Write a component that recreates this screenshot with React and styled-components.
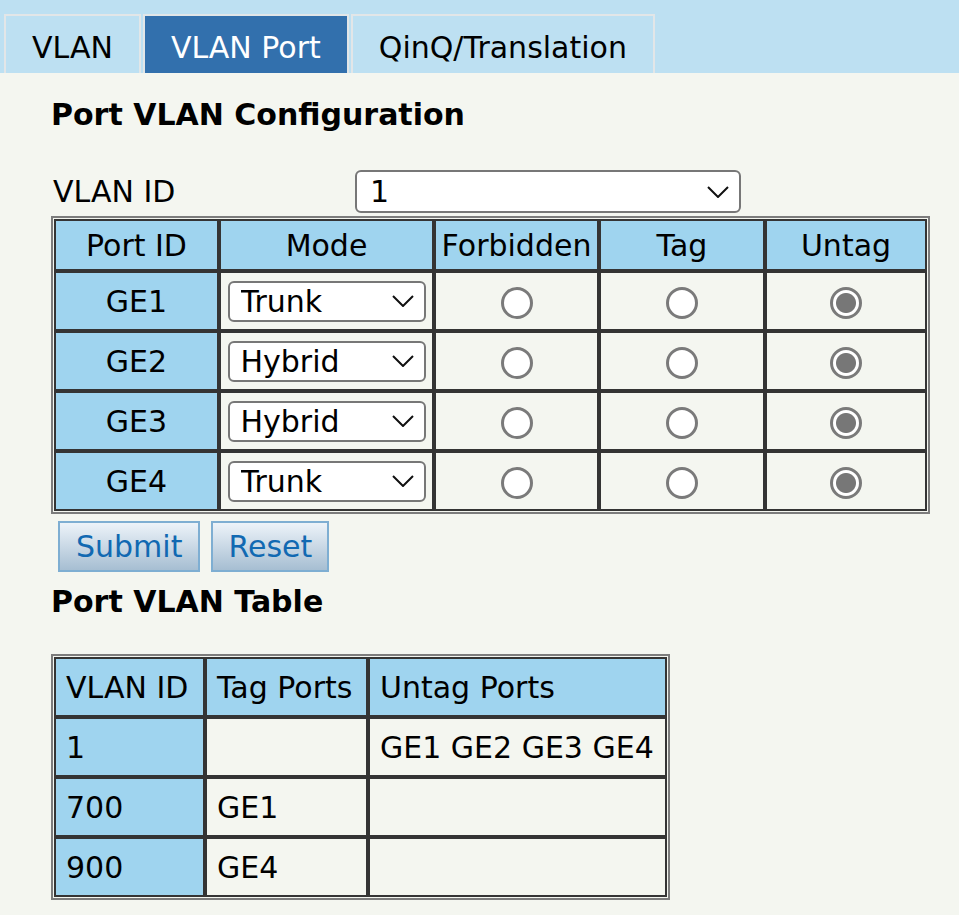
import styled, { createGlobalStyle } from "styled-components";

const GlobalStyle = createGlobalStyle`
  body {
    margin: 0;
    background: #f4f6f0;
    font-family: "DejaVu Sans", Verdana, sans-serif;
    font-size: 30px;
    color: #000;
  }
`;

const TabBar = styled.div`
  display: flex;
  gap: 2px;
  padding: 14px 0 0 4px;
  background: #bde0f2;
`;

const Tab = styled.div`
  height: 59px;
  box-sizing: border-box;
  padding: 5px 26px 0;
  display: flex;
  align-items: center;
  border: 2px solid #e2e6e8;
  border-bottom: none;
  background: ${(p) => (p.$active ? "#3270ad" : "#bde0f2")};
  color: ${(p) => (p.$active ? "#fff" : "#000")};
`;

const Content = styled.div`
  padding: 0 0 14px 51px;
`;

const Heading = styled.h2`
  font-size: 30px;
  font-weight: bold;
  margin: 0;
  height: ${(p) => p.$h}px;
  display: flex;
  align-items: center;
`;

const IdRow = styled.div`
  display: flex;
  align-items: center;
  height: 43px;
  margin: 15px 0 3px 2px;
`;

const Label = styled.span`
  width: 302px;
`;

const SelectWrap = styled.div`
  position: relative;
  display: inline-block;
  vertical-align: middle;
  width: ${(p) => p.$w}px;
  height: ${(p) => p.$h}px;
`;

const Select = styled.select`
  appearance: none;
  display: block;
  width: 100%;
  height: 100%;
  box-sizing: border-box;
  border: 2px solid #777;
  border-radius: 6px;
  background: #fff;
  font-family: inherit;
  font-size: 30px;
  color: #000;
  padding: 0 0 0 ${(p) => p.$pad}px;
  margin: 0;
`;

const Chevron = styled.svg`
  position: absolute;
  right: 12px;
  top: 50%;
  transform: translateY(-50%);
  pointer-events: none;
`;

const Grid = styled.table`
  border-collapse: separate;
  border-spacing: 0;
  border: 2px solid #7c7c7c;
  padding: 1px;
  width: ${(p) => p.$w}px;
  table-layout: fixed;
  margin-top: ${(p) => p.$top || 0}px;
`;

const Cell = styled.td`
  border: 2px solid #343434;
  height: ${(p) => p.$h}px;
  padding: 0 ${(p) => (p.$left ? "10px" : "0")};
  text-align: ${(p) => (p.$left ? "left" : "center")};
  vertical-align: middle;
  background: ${(p) => (p.$blue ? "#9fd4ef" : "transparent")};
  box-sizing: border-box;
  white-space: nowrap;
  font-weight: normal;
`;

const Radio = styled.span`
  display: inline-block;
  vertical-align: middle;
  width: 32px;
  height: 32px;
  box-sizing: border-box;
  border-radius: 50%;
  border: 3px solid #7a7a7a;
  background: ${(p) =>
    p.$checked
      ? "radial-gradient(circle, #777 0 9.5px, #fff 10.5px)"
      : "#fff"};
`;

const Buttons = styled.div`
  display: flex;
  gap: 11px;
  margin: 7px 0 0 7px;
`;

const Button = styled.button`
  height: 51px;
  padding: 0 ${(p) => p.$pad}px;
  border: 2px solid #7eaed2;
  background: linear-gradient(#edf3f9, #a6bed2);
  color: #1169b2;
  font-family: inherit;
  font-size: 30px;
  margin: 0;
`;

const ports = [
  { id: "GE1", mode: "Trunk" },
  { id: "GE2", mode: "Hybrid" },
  { id: "GE3", mode: "Hybrid" },
  { id: "GE4", mode: "Trunk" },
];

const vlans = [
  { id: "1", tag: "", untag: "GE1 GE2 GE3 GE4" },
  { id: "700", tag: "GE1", untag: "" },
  { id: "900", tag: "GE4", untag: "" },
];

function Dropdown({ w, h, pad, value, options }) {
  return (
    <SelectWrap $w={w} $h={h}>
      <Select $pad={pad} defaultValue={value}>
        {options.map((o) => (
          <option key={o}>{o}</option>
        ))}
      </Select>
      <Chevron width="22" height="12" viewBox="0 0 22 12">
        <polyline points="1,1 11,11 21,1" fill="none" stroke="#111" strokeWidth="2" />
      </Chevron>
    </SelectWrap>
  );
}

export default function App() {
  return (
    <>
      <GlobalStyle />
      <TabBar>
        <Tab>VLAN</Tab>
        <Tab $active>VLAN Port</Tab>
        <Tab>QinQ/Translation</Tab>
      </TabBar>
      <Content>
        <Heading $h={82}>Port VLAN Configuration</Heading>
        <IdRow>
          <Label>VLAN ID</Label>
          <Dropdown w={386} h={43} pad={13} value="1" options={["1", "700", "900"]} />
        </IdRow>
        <Grid $w={879}>
          <colgroup>
            <col style={{ width: 165 }} />
            <col style={{ width: 215 }} />
            <col style={{ width: 165 }} />
            <col style={{ width: 166 }} />
            <col />
          </colgroup>
          <thead>
            <tr>
              {["Port ID", "Mode", "Forbidden", "Tag", "Untag"].map((t) => (
                <Cell as="th" key={t} $blue $h={52}>{t}</Cell>
              ))}
            </tr>
          </thead>
          <tbody>
            {ports.map((p) => (
              <tr key={p.id}>
                <Cell $blue $h={60}>{p.id}</Cell>
                <Cell $h={60}>
                  <Dropdown w={198} h={41} pad={11} value={p.mode} options={["Access", "Trunk", "Hybrid"]} />
                </Cell>
                <Cell $h={60}><Radio /></Cell>
                <Cell $h={60}><Radio /></Cell>
                <Cell $h={60}><Radio $checked /></Cell>
              </tr>
            ))}
          </tbody>
        </Grid>
        <Buttons>
          <Button $pad={16}>Submit</Button>
          <Button $pad={15}>Reset</Button>
        </Buttons>
        <Heading $h={58}>Port VLAN Table</Heading>
        <Grid $w={619} $top={24}>
          <colgroup>
            <col style={{ width: 151 }} />
            <col style={{ width: 163 }} />
            <col />
          </colgroup>
          <thead>
            <tr>
              {["VLAN ID", "Tag Ports", "Untag Ports"].map((t) => (
                <Cell as="th" key={t} $blue $left $h={60}>{t}</Cell>
              ))}
            </tr>
          </thead>
          <tbody>
            {vlans.map((v) => (
              <tr key={v.id}>
                <Cell $blue $left $h={60}>{v.id}</Cell>
                <Cell $left $h={60}>{v.tag}</Cell>
                <Cell $left $h={60}>{v.untag}</Cell>
              </tr>
            ))}
          </tbody>
        </Grid>
      </Content>
    </>
  );
}
